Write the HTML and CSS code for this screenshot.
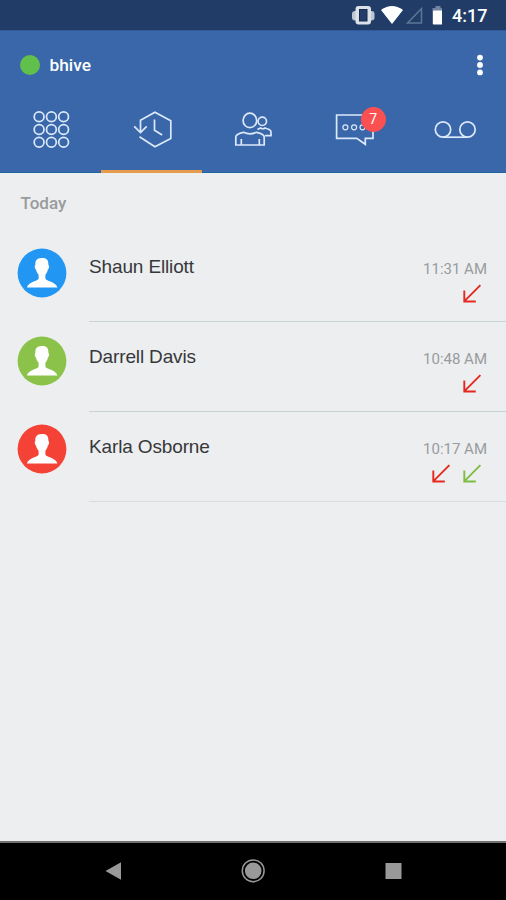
FILE: index.html
```html
<!DOCTYPE html>
<html lang="en">
<head>
<meta charset="utf-8">
<title>bhive</title>
<link rel="stylesheet" href="styles.css">
</head>
<body>
<svg width="0" height="0" class="defs">
  <symbol id="avatar" viewBox="0 0 50 50">
    <circle cx="25" cy="25" r="24.4" fill="currentColor"/>
    <path fill="#fff" d="M24.500 10c4.800-.5 7.200 2 6.900 7 1.200.6.700 3.800-.5 4.500-.5 2.600-1.500 4-2.500 5.200v3.800c.5 2.600 10.500 3 12 8.900H9.900c1.500-5.900 11.200-6.300 11.700-8.900v-3.800c-1-1.200-2.200-2.600-2.600-5.200-1.200-.7-1.800-3.900-.6-4.500-.4-4.200 1.300-6.900 6.100-7z"/>
  </symbol>
  <symbol id="incoming" viewBox="0 0 20 20">
    <path d="M18.400 1.200 2.200 17.300M2.300 6.500v11h11.500" fill="none" stroke="currentColor" stroke-width="1.900"/>
  </symbol>
</svg>
<div class="screen">
  <div class="status">
    <svg width="92" height="30" viewBox="350 0 92 30">
      <rect x="352" y="11" width="22.500" height="9.500" rx="3" fill="#bdc6d5"/>
      <rect x="355.500" y="6" width="15.500" height="18.500" rx="3" fill="#dce1e9"/>
      <rect x="359.500" y="9.500" width="7.500" height="11.500" fill="#223e68" stroke="#152c50" stroke-width="1"/>
      <path d="M381 10q11-8 22 0L392 24z" fill="#fff"/>
      <path d="M421.500 8.500v14.500h-14z" fill="none" stroke="#5f7698" stroke-width="1.500"/>
      <path d="M435.500 6h5v2h3v3h-11V8h3z" fill="#71839e"/>
      <rect x="432.800" y="10.500" width="10.500" height="14" rx="1" fill="#fff"/>
    </svg>
    <span class="clock">4:17</span>
  </div>
  <header>
    <div class="toolbar">
      <span class="presence"></span>
      <span class="brand">bhive</span>
      <svg class="more" width="8" height="24" viewBox="0 0 8 24" fill="#fff"><circle cx="4" cy="4.600" r="2.900"/><circle cx="4" cy="12" r="2.900"/><circle cx="4" cy="19.400" r="2.900"/></svg>
    </div>
    <nav>
      <div class="tab"><svg viewBox="28.600 108 44 44"><g><circle cx="38.700" cy="116.800" r="4.900"/><circle cx="51" cy="116.800" r="4.900"/><circle cx="63.200" cy="116.800" r="4.900"/><circle cx="38.700" cy="129.500" r="4.900"/><circle cx="51" cy="129.500" r="4.900"/><circle cx="63.200" cy="129.500" r="4.900"/><circle cx="38.700" cy="142.200" r="4.900"/><circle cx="51" cy="142.200" r="4.900"/><circle cx="63.200" cy="142.200" r="4.900"/></g></svg></div>
      <div class="tab active"><svg viewBox="129.800 108 44 44"><path d="M140.300 132V120.200L154.700 112.200 170.600 120.800V138.500L154.700 146.700 139.300 136.800M134 126.300l6.300 6.200 6.200-6.200M154.300 119.500V130.300l7.700 4.700"/></svg></div>
      <div class="tab"><svg viewBox="231 108 44 44"><ellipse cx="249.900" cy="120.400" rx="6.800" ry="7.200"/><circle cx="262.300" cy="121.300" r="4.200"/><path d="M235.800 145v-8q0-3 7.700-4.700 6.500 3 13 0 7.700 1.700 7.700 4.700v8zM241.300 139v6M259.300 139v6M257.500 129.500l3-1.500q2.500 1.500 4.500 0 6 1.500 6 4v3.700h-6"/></svg></div>
      <div class="tab"><svg viewBox="332.200 108 44 44"><path d="M336.800 115h36.400v23.300h-7.700v6l-8.500-6h-20.200z"/><g stroke-width="1.200"><circle cx="345.600" cy="127.300" r="2.500"/><circle cx="354.300" cy="127.300" r="2.500"/><circle cx="362.700" cy="127.300" r="2.500"/></g></svg><span class="badge">7</span></div>
      <div class="tab"><svg viewBox="433.400 108 44 44"><circle cx="443.400" cy="129.500" r="7.700"/><circle cx="467.900" cy="129.500" r="7.700"/><path d="M443.400 137.200h24.500"/></svg></div>
    </nav>
  </header>
  <main>
    <h2>Today</h2>
    <div class="calls">
      <div class="avatars">
        <svg class="blue"><use href="#avatar"/></svg>
        <svg class="green"><use href="#avatar"/></svg>
        <svg class="red"><use href="#avatar"/></svg>
      </div>
      <div class="list">
        <div class="call"><span class="name">Shaun Elliott</span><div class="meta"><time>11:31 AM</time><div class="arrows"><svg class="missed"><use href="#incoming"/></svg></div></div></div>
        <div class="call"><span class="name">Darrell Davis</span><div class="meta"><time>10:48 AM</time><div class="arrows"><svg class="missed"><use href="#incoming"/></svg></div></div></div>
        <div class="call"><span class="name">Karla Osborne</span><div class="meta"><time>10:17 AM</time><div class="arrows"><svg class="missed"><use href="#incoming"/></svg><svg class="answered"><use href="#incoming"/></svg></div></div></div>
      </div>
    </div>
  </main>
  <footer>
    <svg width="506" height="57" viewBox="0 843 506 57" fill="#999">
      <path d="M105.500 871 121 862.300v17.400z"/>
      <circle cx="253.200" cy="870.800" r="8.300"/><circle cx="253.200" cy="870.800" r="10.900" fill="none" stroke="#999" stroke-width="1.500"/>
      <rect x="385.500" y="863" width="16" height="16"/>
    </svg>
  </footer>
</div>
</body>
</html>
```
FILE: styles.css
```css
* { box-sizing: border-box; }
body { margin: 0; font-family: Roboto, sans-serif; }
svg { display: block; }
.defs { position: absolute; }
.screen { width: 506px; height: 900px; display: flex; flex-direction: column; background: #eceef0; overflow: hidden; }
.status { height: 30px; background: #213d67; display: flex; align-items: center; padding-left: 350px; }
.clock { color: #fff; font-weight: 500; font-size: 18px; line-height: 30px; margin-left: 10px; padding-top: 2px; }
header { height: 143px; background: #3967a9; border-top: 1px solid #315b98; border-bottom: 1px solid #2462a3; }
.toolbar { height: 70px; display: flex; align-items: center; padding: 0 22px 3px 20px; }
.presence { width: 20px; height: 20px; border-radius: 50%; background: #61bf4b; }
.brand { color: #fff; font-weight: 500; font-size: 17.3px; margin-left: 9.5px; }
.more { margin-left: auto; }
nav { display: flex; height: 72px; }
.tab { flex: 1; position: relative; display: flex; justify-content: center; padding-top: 7px; height: 72px; }
.tab svg { width: 44px; height: 44px; fill: none; stroke: #dce9fb; stroke-width: 1.7; }
.active { border-bottom: 3px solid #e69b4d; }
.badge { position: absolute; left: 57px; top: 6px; width: 25px; height: 25px; border-radius: 50%; background: #fa5052; color: #fff; font-size: 14px; line-height: 25px; text-align: center; }
main { flex: 1; }
h2 { margin: 0; padding: 20px 0 0 20.5px; height: 58px; font-size: 17px; line-height: 21px; font-weight: 500; color: #999b9d; }
.calls { display: flex; }
.avatars { width: 89px; padding: 17.3px 0 0 17px; display: grid; grid-auto-rows: 87.7px; align-content: start; }
.avatars svg { width: 50px; height: 50px; }
.blue { color: #2196f3; }
.green { color: #8bc34a; }
.red { color: #f44336; }
.list { flex: 1; }
.call { height: 90px; display: flex; justify-content: space-between; padding: 24px 19px 0 0; border-bottom: 1px solid #c9d2d5; }
.call:first-child { height: 91px; padding-top: 25px; }
.call:last-child { border-color: #d8dcde; }
.name { font-family: "Liberation Sans", sans-serif; font-size: 19px; line-height: 22px; letter-spacing: -0.14px; color: #37383a; }
.meta { padding-top: 4px; display: flex; flex-direction: column; align-items: flex-end; }
time { font-size: 15px; line-height: 18px; color: #999b9d; }
.arrows { display: flex; gap: 11px; padding: 5.5px 5px 0 0; }
.arrows svg { width: 20px; height: 20px; }
.missed { color: #e5281f; }
.answered { color: #7fbd42; }
footer { height: 59px; background: #000; border-top: 2px solid #707172; }
```
